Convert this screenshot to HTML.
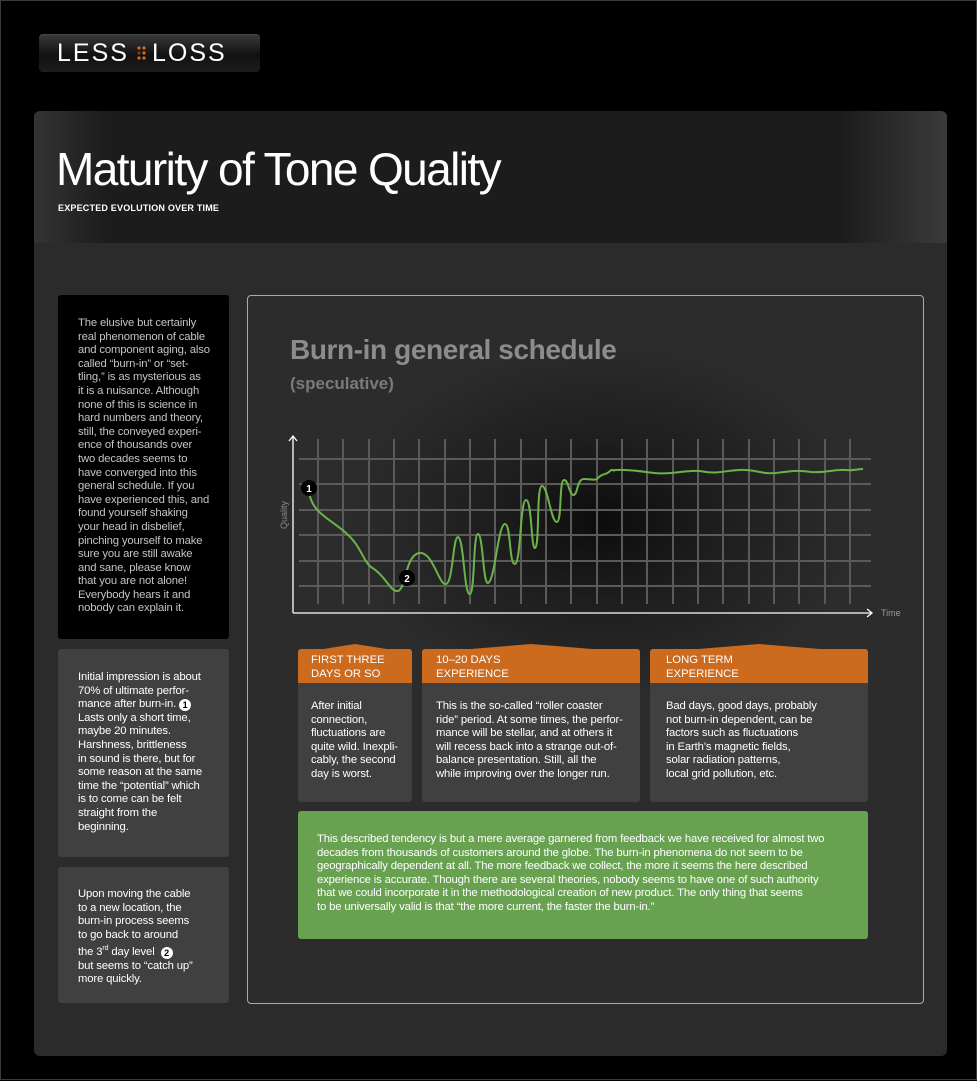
<!DOCTYPE html>
<html><head><meta charset="utf-8"><style>
*{margin:0;padding:0;box-sizing:border-box}
body{width:977px;height:1080px;background:#000;position:relative;overflow:hidden;font-family:"Liberation Sans Narrow","Liberation Sans",sans-serif;border:1px solid #3a3a3a}
.abs{position:absolute}
.logo{left:38px;top:33px;width:221px;height:38px;border-radius:4px;background:linear-gradient(#3a3a3a,#111 55%,#1c1c1c);box-shadow:0 1px 0 #444 inset}
.logo span{position:absolute;top:5px;font-family:"Liberation Sans",sans-serif;font-size:25px;color:#fff;letter-spacing:2px;font-weight:normal}
.panel{left:33px;top:110px;width:913px;height:945px;background:#2b2b2b;border-radius:6px;overflow:hidden}
.head{left:0;top:0;width:913px;height:132px;background:linear-gradient(90deg,#333 0%,#1c1c1c 8%,#1b1b1b 88%,#3a3a3a 100%)}
.title{left:22px;top:31px;font-family:"Liberation Sans",sans-serif;font-size:46px;font-weight:normal;color:#fff;letter-spacing:-1.6px;white-space:nowrap}
.sub{left:24px;top:92px;font-family:"Liberation Sans",sans-serif;font-size:9px;font-weight:bold;color:#fff;font-variant:small-caps;letter-spacing:0.2px}
.box{border-radius:3px}
.t{font-size:11.3px;line-height:13.6px;white-space:nowrap;letter-spacing:-0.15px}
.card{background:#404040;border-radius:3px}
.ch{background:#cc6a1e;color:#fff;font-size:11.3px;line-height:14px;padding:4px 0 0 13px;height:34px;border-radius:3px 3px 0 0}
.num{display:inline-block;width:12px;height:12px;border-radius:6px;background:#fff;color:#000;font-size:9px;line-height:12px;text-align:center;font-weight:bold;vertical-align:-1px}
</style></head><body>
<div class="abs logo"><span style="left:18px">LESS</span>
<svg class="abs" style="left:97px;top:12px" width="14" height="16"><g fill="#d9691c"><circle cx="3" cy="2" r="1.6"/><circle cx="8" cy="2" r="1.6"/><circle cx="8" cy="7" r="1.6"/><circle cx="3" cy="12" r="1.6"/><circle cx="8" cy="12" r="1.6"/><circle cx="3" cy="7" r="1.6" fill="#7a3d12"/></g></svg>
<span style="left:113px">LOSS</span></div>
<div class="abs panel">
<div class="abs head"></div>
<div class="abs title">Maturity of Tone Quality</div>
<div class="abs sub">EXPECTED EVOLUTION OVER TIME</div>
</div>

<div class="abs box" style="left:57px;top:294px;width:171px;height:344px;background:#000"></div>
<div class="abs t" style="left:77px;top:316px;color:#c4c4c4">The elusive but certainly<br>real phenomenon of cable<br>and component aging, also<br>called “burn-in” or “set-<br>tling,” is as mysterious as<br>it is a nuisance. Although<br>none of this is science in<br>hard numbers and theory,<br>still, the conveyed experi-<br>ence of thousands over<br>two decades seems to<br>have converged into this<br>general schedule. If you<br>have experienced this, and<br>found yourself shaking<br>your head in disbelief,<br>pinching yourself to make<br>sure you are still awake<br>and sane, please know<br>that you are not alone!<br>Everybody hears it and<br>nobody can explain it.</div>

<div class="abs box" style="left:57px;top:648px;width:171px;height:208px;background:#404040"></div>
<div class="abs t" style="left:77px;top:670px;color:#fff">Initial impression is about<br>70% of ultimate perfor-<br>mance after burn-in. <span class="num">1</span><br>Lasts only a short time,<br>maybe 20 minutes.<br>Harshness, brittleness<br>in sound is there, but for<br>some reason at the same<br>time the “potential” which<br>is to come can be felt<br>straight from the<br>beginning.</div>

<div class="abs box" style="left:57px;top:866px;width:171px;height:136px;background:#404040"></div>
<div class="abs t" style="left:77px;top:887px;color:#fff">Upon moving the cable<br>to a new location, the<br>burn-in process seems<br>to go back to around<br>the 3<sup style="font-size:7px">rd</sup> day level &nbsp;<span class="num">2</span><br>but seems to “catch up”<br>more quickly.</div>

<div class="abs" style="left:246px;top:294px;width:677px;height:709px;border:1px solid #aaa;border-radius:4px;background:radial-gradient(ellipse 260px 180px at 355px 225px,#0c0c0c 0%,#1e1e1e 45%,#2c2c2c 100%)"></div>
<div class="abs" style="left:289px;top:333px;font-family:'Liberation Sans',sans-serif;font-weight:bold;font-size:28px;color:#8c8c8c;letter-spacing:-0.4px">Burn-in general schedule</div>
<div class="abs" style="left:289px;top:373px;font-family:'Liberation Sans',sans-serif;font-weight:bold;font-size:17px;color:#7a7a7a">(speculative)</div>

<svg class="abs" style="left:0;top:0" width="977" height="1080">
<g stroke="#5a5a5a" stroke-width="2">
<line x1="298" y1="458" x2="870" y2="458"/><line x1="298" y1="483" x2="870" y2="483"/><line x1="298" y1="509" x2="870" y2="509"/><line x1="298" y1="534" x2="870" y2="534"/><line x1="298" y1="560" x2="870" y2="560"/><line x1="298" y1="585" x2="870" y2="585"/>
</g>
<g stroke="#5a5a5a" stroke-width="2">
<line x1="317" y1="438" x2="317" y2="603"/><line x1="342" y1="438" x2="342" y2="603"/><line x1="368" y1="438" x2="368" y2="603"/><line x1="393" y1="438" x2="393" y2="603"/><line x1="418" y1="438" x2="418" y2="603"/><line x1="444" y1="438" x2="444" y2="603"/><line x1="469" y1="438" x2="469" y2="603"/><line x1="494" y1="438" x2="494" y2="603"/><line x1="520" y1="438" x2="520" y2="603"/><line x1="545" y1="438" x2="545" y2="603"/><line x1="570" y1="438" x2="570" y2="603"/><line x1="596" y1="438" x2="596" y2="603"/><line x1="621" y1="438" x2="621" y2="603"/><line x1="646" y1="438" x2="646" y2="603"/><line x1="672" y1="438" x2="672" y2="603"/><line x1="697" y1="438" x2="697" y2="603"/><line x1="722" y1="438" x2="722" y2="603"/><line x1="748" y1="438" x2="748" y2="603"/><line x1="773" y1="438" x2="773" y2="603"/><line x1="798" y1="438" x2="798" y2="603"/><line x1="824" y1="438" x2="824" y2="603"/><line x1="849" y1="438" x2="849" y2="603"/>
</g>
<g stroke="#fff" stroke-width="1.3" fill="none">
<line x1="292" y1="436" x2="292" y2="612"/><polyline points="288,440 292,435 296,440"/>
<line x1="292" y1="612" x2="870" y2="612"/><polyline points="866,608 871,612 866,616"/>
</g>
<text x="880" y="615" fill="#999" font-size="9" font-family="Liberation Sans Narrow,Liberation Sans,sans-serif">Time</text>
<text x="286" y="528" fill="#888" font-size="9" font-family="Liberation Sans Narrow,Liberation Sans,sans-serif" transform="rotate(-90 286 528)">Quality</text>
<path fill="none" stroke="#6cb24a" stroke-width="2" stroke-linejoin="round" d="M308,490 C310,512 330,518 345,532 C360,545 362,560 370,566 C385,575 390,592 397,590 C405,588 404,555 418,552 C432,550 438,585 445,583 C452,582 452,535 457,536 C463,537 463,595 469,593 C474,591 472,533 477,533 C482,533 482,583 487,582 C494,580 497,523 504,523 C510,523 508,564 514,563 C520,562 519,499 525,499 C531,499 530,548 534,547 C539,545 535,485 541,485 C547,485 550,522 556,521 C561,520 558,479 563,479 C568,479 568,495 573,494 C577,492 576,478 583,478 C590,478 595,480 597,477 C601,472 606,474 609,470 C612,467 612,471 614,469 C640,468 650,474 670,472 C690,470 695,469 705,471 C720,473 730,468 745,469 C760,470 760,473 775,472 C790,470 795,469 810,471 C825,472 835,468 845,469 C852,470 856,468 862,468"/>
<circle cx="308" cy="487" r="8" fill="#000"/><text x="308" y="491" fill="#fff" font-size="10" font-weight="bold" text-anchor="middle" font-family="Liberation Sans,sans-serif">1</text>
<circle cx="406" cy="577" r="8" fill="#000"/><text x="406" y="581" fill="#fff" font-size="10" font-weight="bold" text-anchor="middle" font-family="Liberation Sans,sans-serif">2</text>
<g fill="#cc6a1e">
<polygon points="297,652 354,643 411,652"/><polygon points="421,652 530,643 639,652"/><polygon points="649,652 758,643 867,652"/>
</g>
</svg>

<div class="abs card" style="left:297px;top:648px;width:114px;height:153px"><div class="ch">FIRST THREE<br>DAYS OR SO</div></div>
<div class="abs t" style="left:310px;top:699px;color:#fff">After initial<br>connection,<br>fluctuations are<br>quite wild. Inexpli-<br>cably, the second<br>day is worst.</div>
<div class="abs card" style="left:421px;top:648px;width:218px;height:153px"><div class="ch" style="padding-left:14px">10–20 DAYS<br>EXPERIENCE</div></div>
<div class="abs t" style="left:435px;top:699px;color:#fff">This is the so-called “roller coaster<br>ride” period. At some times, the perfor-<br>mance will be stellar, and at others it<br>will recess back into a strange out-of-<br>balance presentation. Still, all the<br>while improving over the longer run.</div>
<div class="abs card" style="left:649px;top:648px;width:218px;height:153px"><div class="ch" style="padding-left:16px">LONG TERM<br>EXPERIENCE</div></div>
<div class="abs t" style="left:665px;top:699px;color:#fff">Bad days, good days, probably<br>not burn-in dependent, can be<br>factors such as fluctuations<br>in Earth’s magnetic fields,<br>solar radiation patterns,<br>local grid pollution, etc.</div>

<div class="abs" style="left:297px;top:810px;width:570px;height:128px;background:#68a251;border-radius:3px"></div>
<div class="abs t" style="left:316px;top:832px;color:#fff">This described tendency is but a mere average garnered from feedback we have received for almost two<br>decades from thousands of customers around the globe. The burn-in phenomena do not seem to be<br>geographically dependent at all. The more feedback we collect, the more it seems the here described<br>experience is accurate. Though there are several theories, nobody seems to have one of such authority<br>that we could incorporate it in the methodological creation of new product. The only thing that seems<br>to be universally valid is that “the more current, the faster the burn-in.”</div>
</body></html>
